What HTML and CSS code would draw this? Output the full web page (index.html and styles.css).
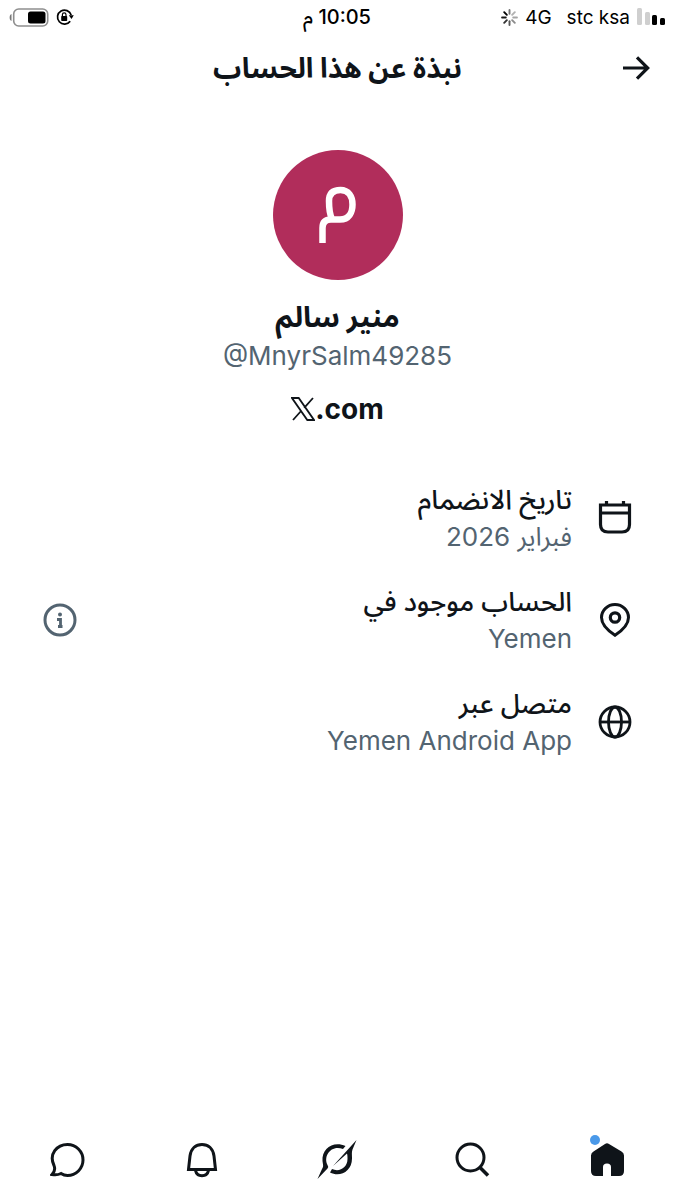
FILE: index.html
```
<!DOCTYPE html>
<html lang="ar" dir="rtl">
<head>
<meta charset="utf-8">
<meta name="viewport" content="width=device-width, initial-scale=1">
<title>نبذة عن هذا الحساب</title>
<link rel="stylesheet" href="styles.css">
</head>
<body>
<div class="app">
  <div class="status">
    <div class="status-side">
      <svg class="signal" viewBox="0 0 28 18" aria-hidden="true"><rect x="0" y="0" width="5" height="17" rx="1.5" fill="#cfcfcf"/><rect x="8" y="4" width="5" height="13" rx="1.5" fill="#cfcfcf"/><rect x="15" y="7" width="5" height="10" rx="1.5"/><rect x="23" y="10" width="5" height="7" rx="1.5"/></svg>
      <span class="carrier" dir="ltr">stc ksa</span>
      <span class="network">4G</span>
      <svg class="spinner" viewBox="-8 -8 16 16" aria-hidden="true" stroke="#000" stroke-width="1.8" stroke-linecap="round"><path d="M0-3.5V-7" opacity=".55"/><path d="M2.5-2.5 5-5" opacity=".3"/><path d="M3.5 0H7" opacity=".35"/><path d="M2.5 2.5 5 5" opacity=".45"/><path d="M0 3.5V7" opacity=".65"/><path d="M-2.5 2.5-5 5" opacity=".8"/><path d="M-3.5 0H-7" opacity=".9"/><path d="M-2.5-2.5-5-5"/></svg>
    </div>
    <time class="clock">10:05 م</time>
    <div class="status-side status-end">
      <svg class="lock" viewBox="0 0 18 18" aria-hidden="true"><path d="M14.2 13.2A7 7 0 1 1 15.2 7" fill="none" stroke="#000" stroke-width="1.7"/><path d="M12.8 7.2h5L15.5 11z"/><rect x="5.2" y="8" width="6" height="5" rx=".8"/><path d="M6.4 8.5V6.7a1.8 1.8 0 0 1 3.6 0v1.8" fill="none" stroke="#000" stroke-width="1.2"/></svg>
      <svg class="battery" viewBox="0 0 40 19" aria-hidden="true"><path d="M2.500 6v7C0 12.500 0 6.500 2.500 6z" fill="#777"/><rect x="4.700" y="1" width="34" height="17" rx="5" fill="none" stroke="#8e8e8e" stroke-width="1.600"/><rect x="19" y="3.500" width="17.500" height="12" rx="2.500"/></svg>
    </div>
  </div>

  <header class="topbar">
    <button class="icon-button" type="button" aria-label="رجوع"><svg class="arrow" viewBox="0 0 28 26" aria-hidden="true"><path d="M0 13h25M14 2.300 24.700 13 14 23.700" fill="none" stroke="currentColor" stroke-width="3.200"/></svg></button>
    <h1 class="title">نبذة عن هذا الحساب</h1>
  </header>

  <main class="content">
    <section class="profile">
      <div class="avatar"><svg viewBox="0 0 130 130" aria-hidden="true"><path d="M49.500 93V78q0-8.500 8.500-8.500H67c9 0 12.500-7 12.500-15 0-8-4-14.500-12-14.500S56 44 56 51c0 7 .5 13 3 18" fill="none" stroke="#fff" stroke-width="6.500"/></svg></div>
      <h2 class="name">منير سالم</h2>
      <p class="handle" dir="ltr">@MnyrSalm49285</p>
      <a class="site" dir="ltr" href="#" aria-label="X.com"><svg class="x-logo" viewBox="0 0 24 24" aria-hidden="true"><path d="M1 1h6.700l15.300 22h-6.700zM22 1 13.200 10.800M10.500 13.500 2 23" fill="none" stroke="currentColor" stroke-width="1.800"/></svg><span>.com</span></a>
    </section>

    <ul class="facts">
      <li class="fact">
        <svg class="icon" viewBox="0 0 34 34" fill="none" stroke="currentColor" stroke-width="3.200" aria-hidden="true"><path d="M2.500 4h29v19.500q0 7.500-7.500 7.500H10q-7.500 0-7.500-7.500zM3 12h28M8.500 0v4M25.500 0v4"/></svg>
        <div class="fact-text"><span class="label">تاريخ الانضمام</span><span class="value">فبراير 2026</span></div>
      </li>
      <li class="fact">
        <svg class="icon" viewBox="0 0 34 34" fill="none" stroke="currentColor" stroke-width="3" aria-hidden="true"><path d="M17 32.300C10.500 28 3.500 22 3.500 14.500a13.500 13 0 0 1 27 0C30.500 22 23.500 28 17 32.300z"/><circle cx="17" cy="14.500" r="4.700" stroke-width="3.200"/></svg>
        <div class="fact-text"><span class="label">الحساب موجود في</span><span class="value" dir="ltr">Yemen</span></div>
        <button class="icon-button info" type="button" aria-label="معلومات"><svg class="icon" viewBox="0 0 34 34" aria-hidden="true"><circle cx="17" cy="17" r="15" fill="none" stroke="currentColor" stroke-width="3"/><circle cx="17" cy="11.500" r="2" fill="currentColor"/><path d="M14 16.500h3.500V23M15 23.500h4.500" fill="none" stroke="currentColor" stroke-width="2.800"/></svg></button>
      </li>
      <li class="fact">
        <svg class="icon" viewBox="0 0 34 34" fill="none" stroke="currentColor" stroke-width="2.800" aria-hidden="true"><circle cx="17" cy="17" r="15"/><ellipse cx="17" cy="17" rx="6.500" ry="15"/><path d="M2 17h30"/></svg>
        <div class="fact-text"><span class="label">متصل عبر</span><span class="value" dir="ltr">Yemen Android App</span></div>
      </li>
    </ul>
  </main>

  <nav class="tabs" aria-label="التنقل">
    <a class="tab" href="#" aria-label="الرئيسية"><span class="home"><svg class="tab-icon" viewBox="0 0 36 36" aria-hidden="true"><path d="M15 2q2-1.300 4 0l12.500 7.500q2.500 1.500 2.500 4V29q0 5-5 5h-8V25q0-3.500-4-3.500T13 25v9H6q-5 0-5-5V13.500q0-2.500 2.500-4z" fill="currentColor"/></svg><span class="dot"></span></span></a>
    <a class="tab" href="#" aria-label="بحث"><svg class="tab-icon" viewBox="0 0 36 36" fill="none" stroke="currentColor" stroke-width="3" aria-hidden="true"><circle cx="15.500" cy="15.500" r="13.500"/><path d="m24.500 25 8.500 8.500" stroke-width="3.500"/></svg></a>
    <a class="tab" href="#" aria-label="Grok"><svg class="grok" viewBox="0 0 42 42" fill="currentColor" aria-hidden="true"><path d="M39.500 1 35.500 10.500c-1 2.500-.5 5-.5 9 0 13-12 19-22 14l2-3.500c7.500 3.500 15.500-1.500 15.500-10 0-2.500 0-3.500-.5-5.500L16 27z"/><path d="M28.500 7C16 1.500 4.500 10 5.500 22c.3 3 1.500 5.500-.5 8L.5 40l10-10.500q1.500-1.500 0-3.500C6 17 14 5.500 26 10z"/></svg></a>
    <a class="tab" href="#" aria-label="الإشعارات"><svg class="tab-icon" viewBox="0 0 36 36" fill="none" stroke="currentColor" stroke-width="3" aria-hidden="true"><path d="M3.500 27.500 5 14C6 6.500 11 2.500 17 2.500S28 6.500 29 14L30.500 27.500zM10.500 28.500c1.500 7 11.500 7 13 0"/></svg></a>
    <a class="tab" href="#" aria-label="الرسائل"><svg class="tab-icon" viewBox="0 0 36 36" fill="none" stroke="currentColor" stroke-width="3" aria-hidden="true"><path d="M2 32.500q4-4 2-9C-1.500 12 7 2.500 17.500 2.500c8.500 0 15.500 7 15.500 15.500S26 33.500 17.500 33.500q-3.500 0-6.500-2-4 2-9 1z"/></svg></a>
  </nav>
</div>
</body>
</html>
```
FILE: styles.css
```
* {
  box-sizing: border-box;
}

body {
  margin: 0;
  background: #fff;
  color: #0f1419;
  font-family: Inter, "Noto Sans Arabic", "Noto Sans", "DejaVu Sans", sans-serif;
}

h1,
h2,
p,
ul {
  margin: 0;
  padding: 0;
}

a {
  color: inherit;
  text-decoration: none;
}

svg {
  display: block;
  flex: none;
}

.app {
  min-height: 100vh;
  display: flex;
  flex-direction: column;
}

.status {
  display: grid;
  grid-template-columns: 1fr auto 1fr;
  align-items: center;
  height: 34px;
  padding: 0 10px 0 9px;
  color: #000;
}

.status-side {
  display: flex;
  align-items: center;
  gap: 7px;
  font-size: 19px;
}

.status-end {
  justify-content: flex-end;
}

.network {
  margin-inline-start: 8px;
}

.clock {
  font-size: 20px;
  font-weight: 500;
  line-height: 28px;
}

.signal {
  width: 28px;
  height: 18px;
}

.spinner {
  width: 17px;
  height: 17px;
}

.lock {
  width: 18px;
  height: 18px;
}

.battery {
  width: 40px;
  height: 19px;
}

.topbar {
  display: grid;
  grid-template-columns: 48px 1fr 48px;
  align-items: center;
  height: 68px;
  padding: 0 24px;
}

.icon-button {
  padding: 0;
  border: 0;
  background: none;
  color: inherit;
  cursor: pointer;
}

.arrow {
  width: 28px;
  height: 26px;
}

.title {
  font-size: 28px;
  font-weight: 700;
  line-height: 40px;
  text-align: center;
}

.content {
  flex: 1;
  padding-top: 48px;
}

.profile {
  display: flex;
  flex-direction: column;
  align-items: center;
}

.avatar {
  width: 130px;
  border-radius: 50%;
  background: #b12d5b;
}

.name {
  margin-top: 18px;
  font-size: 29px;
  font-weight: 700;
  line-height: 38px;
}

.handle {
  color: #536471;
  font-size: 26px;
  line-height: 40px;
}

.site {
  display: flex;
  align-items: center;
  margin-top: 14px;
  font-size: 28px;
  font-weight: 700;
  line-height: 38px;
}

.x-logo {
  width: 24px;
  height: 24px;
}

.facts {
  display: flex;
  flex-direction: column;
  gap: 28px;
  margin-top: 53px;
  padding: 0 43px;
  list-style: none;
}

.fact {
  display: flex;
  align-items: center;
  gap: 26px;
}

.icon {
  width: 34px;
  height: 34px;
}

.fact-text {
  flex: 1;
  display: flex;
  flex-direction: column;
  align-items: flex-start;
  font-size: 26px;
  line-height: 37px;
}

.label {
  font-size: 27px;
  font-weight: 500;
}

.value,
.info {
  color: #536471;
}

.tabs {
  display: grid;
  grid-template-columns: repeat(5, 1fr);
  height: 80px;
}

.tab {
  display: flex;
  align-items: center;
  justify-content: center;
}

.tab-icon {
  width: 36px;
  height: 36px;
}

.grok {
  width: 42px;
  height: 42px;
}

.home {
  position: relative;
}

.dot {
  position: absolute;
  top: -7px;
  left: 0;
  width: 10px;
  height: 10px;
  border-radius: 50%;
  background: #4a99e9;
}
```
